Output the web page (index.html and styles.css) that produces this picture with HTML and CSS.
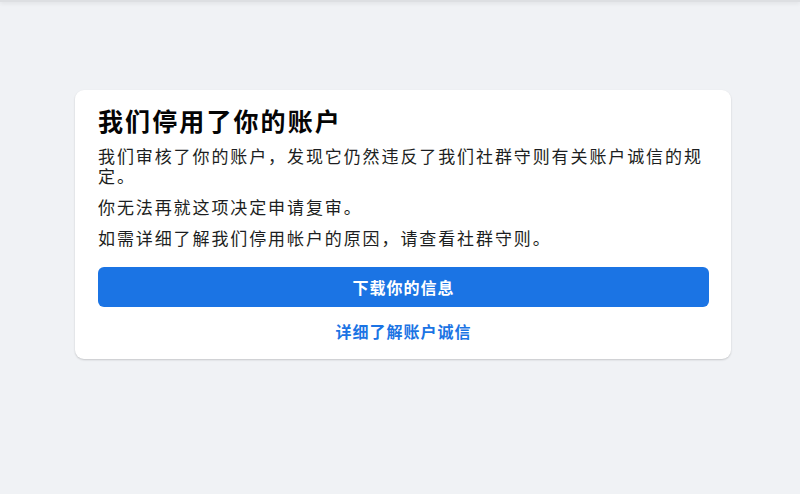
FILE: index.html
```html
<!DOCTYPE html>
<html lang="zh-CN">
<head>
    <meta charset="UTF-8">
    <title>我们停用了你的账户</title>
    <link rel="stylesheet" href="styles.css">
</head>
<body>
    <div class="topbar"></div>

    <div class="page">
        <div class="card">
            <h1 class="card-title">我们停用了你的账户</h1>
            <p class="card-text">我们审核了你的账户，发现它仍然违反了我们社群守则有关账户诚信的规定。</p>
            <p class="card-text">你无法再就这项决定申请复审。</p>
            <p class="card-text">如需详细了解我们停用帐户的原因，请查看社群守则。</p>

            <button class="primary-btn">下载你的信息</button>
            <a class="more-link" href="#">详细了解账户诚信</a>
        </div>
    </div>
</body>
</html>
```

FILE: styles.css
```css
* {
    margin: 0;
    padding: 0;
    box-sizing: border-box;
}

body {
    font-family: "Noto Sans CJK SC", "Noto Sans", sans-serif;
    background: #f0f2f5;
    color: #1c1e21;
    min-height: 100vh;
}

.topbar {
    height: 2px;
    background: #dddfe2;
    box-shadow: 0 1px 4px rgba(0, 0, 0, 0.12);
}

.page {
    padding: 88px 0 0 75px;
}

.card {
    width: 656px;
    background: #fff;
    border-radius: 9px;
    box-shadow: 0 1px 2px rgba(0, 0, 0, 0.18);
    padding: 16px 22px 18px 23px;
    display: flex;
    flex-direction: column;
}

.card-title {
    font-size: 25px;
    line-height: 28px;
    font-weight: 700;
    letter-spacing: 2.1px;
    color: #050505;
    margin-bottom: 12px;
}

.card-text {
    font-size: 17px;
    line-height: 20px;
    letter-spacing: 1.9px;
    color: #1c1e21;
    margin-bottom: 11px;
}

.primary-btn {
    margin-top: 8px;
    height: 40px;
    border: none;
    border-radius: 6px;
    background: #1b74e4;
    color: #fff;
    font-family: inherit;
    font-size: 16px;
    font-weight: 700;
    letter-spacing: 1px;
    cursor: pointer;
}

.more-link {
    margin-top: 14px;
    text-align: center;
    font-size: 16px;
    line-height: 20px;
    font-weight: 700;
    letter-spacing: 1px;
    color: #1b74e4;
    text-decoration: none;
}
```
